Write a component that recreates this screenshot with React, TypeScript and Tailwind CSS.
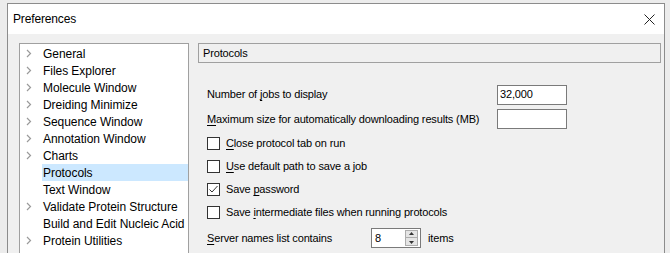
import React from 'react';

const treeItems: { label: string; arrow: boolean; selected?: boolean }[] = [
  { label: 'General', arrow: true },
  { label: 'Files Explorer', arrow: true },
  { label: 'Molecule Window', arrow: true },
  { label: 'Dreiding Minimize', arrow: true },
  { label: 'Sequence Window', arrow: true },
  { label: 'Annotation Window', arrow: true },
  { label: 'Charts', arrow: true },
  { label: 'Protocols', arrow: false, selected: true },
  { label: 'Text Window', arrow: false },
  { label: 'Validate Protein Structure', arrow: true },
  { label: 'Build and Edit Nucleic Acid', arrow: false },
  { label: 'Protein Utilities', arrow: true },
];

function Chevron() {
  return (
    <svg width="6" height="9" viewBox="0 0 6 9" className="shrink-0">
      <path d="M1 1 L4.5 4.5 L1 8" fill="none" stroke="#9a9a9a" strokeWidth="1.2" />
    </svg>
  );
}

function Checkbox({ checked }: { checked?: boolean }) {
  return (
    <span className="w-[13px] h-[13px] border border-[#333] bg-white flex items-center justify-center shrink-0">
      {checked && (
        <svg width="11" height="11" viewBox="0 0 11 11">
          <path d="M1.5 5.5 L4 8 L9.5 2" fill="none" stroke="#333" strokeWidth="1" />
        </svg>
      )}
    </span>
  );
}

function CheckRow({ before, key_, after, checked }: { before: string; key_: string; after: string; checked?: boolean }) {
  return (
    <div className="h-[23px] flex items-center gap-[6px] whitespace-nowrap">
      <Checkbox checked={checked} />
      <span>
        {before}
        <span className="underline underline-offset-2">{key_}</span>
        {after}
      </span>
    </div>
  );
}

export default function App() {
  return (
    <div
      className="w-[670px] h-[253px] overflow-hidden bg-[#ececec] pt-[3px] pl-[7px] pr-[5px] text-[11px] tracking-[-0.15px] text-black"
      style={{ fontFamily: '"Liberation Sans", Arial, sans-serif' }}
    >
      <div className="h-[260px] border border-[#8c8c8c] bg-[#f0f0f0] flex flex-col">
        <div className="h-[30px] bg-white flex items-center justify-between pl-[5px] pr-[9px] shrink-0">
          <span className="text-[12px]">Preferences</span>
          <svg width="11" height="11" viewBox="0 0 11 11">
            <path d="M0.5 0.5 L10.5 10.5 M10.5 0.5 L0.5 10.5" stroke="#222" strokeWidth="1" />
          </svg>
        </div>
        <div className="flex pl-[11px] pr-[3px] pt-[9px] gap-[9px] grow">
          <div className="w-[170px] h-[230px] border border-[#a0a0a0] bg-white pt-[1px] shrink-0 overflow-hidden text-[12px] tracking-[-0.05px]">
            {treeItems.map((item) => (
              <div key={item.label} className="h-[17px] flex items-center">
                <div className="w-[22px] shrink-0 flex justify-end pr-[10px]">{item.arrow && <Chevron />}</div>
                <div
                  className={`h-[17px] flex items-center pl-[1px] grow whitespace-nowrap ${item.selected ? 'bg-[#cce8ff]' : ''}`}
                >
                  {item.label}
                </div>
              </div>
            ))}
          </div>
          <div className="grow min-w-0">
            <div className="h-[20px] border border-[#a0a0a0] bg-[#f0f0f0] flex items-center pl-[4px]">Protocols</div>
            <div className="pl-[9px] pt-[20px]">
              <div className="h-[23px] flex items-center whitespace-nowrap">
                <span className="w-[290px]">
                  Number of <span className="underline underline-offset-2">j</span>obs to display
                </span>
                <div className="w-[70px] h-[20px] border border-[#7a7a7a] bg-white flex items-center pl-[2px]">32,000</div>
              </div>
              <div className="h-[26px] flex items-center whitespace-nowrap">
                <span className="w-[290px]">
                  <span className="underline underline-offset-2">M</span>aximum size for automatically downloading results (MB)
                </span>
                <div className="w-[70px] h-[20px] border border-[#7a7a7a] bg-white shrink-0" />
              </div>
              <CheckRow before="" key_="C" after="lose protocol tab on run" />
              <CheckRow before="" key_="U" after="se default path to save a job" />
              <CheckRow before="Save " key_="p" after="assword" checked />
              <CheckRow before="Save " key_="i" after="ntermediate files when running protocols" />
              <div className="h-[28px] flex items-center whitespace-nowrap">
                <span className="w-[164px]">
                  <span className="underline underline-offset-2">S</span>erver names list contains
                </span>
                <div className="w-[50px] h-[20px] border border-[#7a7a7a] bg-white flex items-center justify-between pl-[3px] pr-[2px]">
                  <span>8</span>
                  <div className="w-[13px] h-[16px] border border-[#adadad] bg-[#e5e5e5] flex flex-col items-center justify-around">
                    <svg width="5" height="3" viewBox="0 0 5 3"><path d="M0 3 L2.5 0 L5 3 Z" fill="#333" /></svg>
                    <div className="w-full h-px bg-[#adadad]" />
                    <svg width="5" height="3" viewBox="0 0 5 3"><path d="M0 0 L2.5 3 L5 0 Z" fill="#333" /></svg>
                  </div>
                </div>
                <span className="ml-[7px]">items</span>
              </div>
            </div>
          </div>
        </div>
      </div>
    </div>
  );
}
